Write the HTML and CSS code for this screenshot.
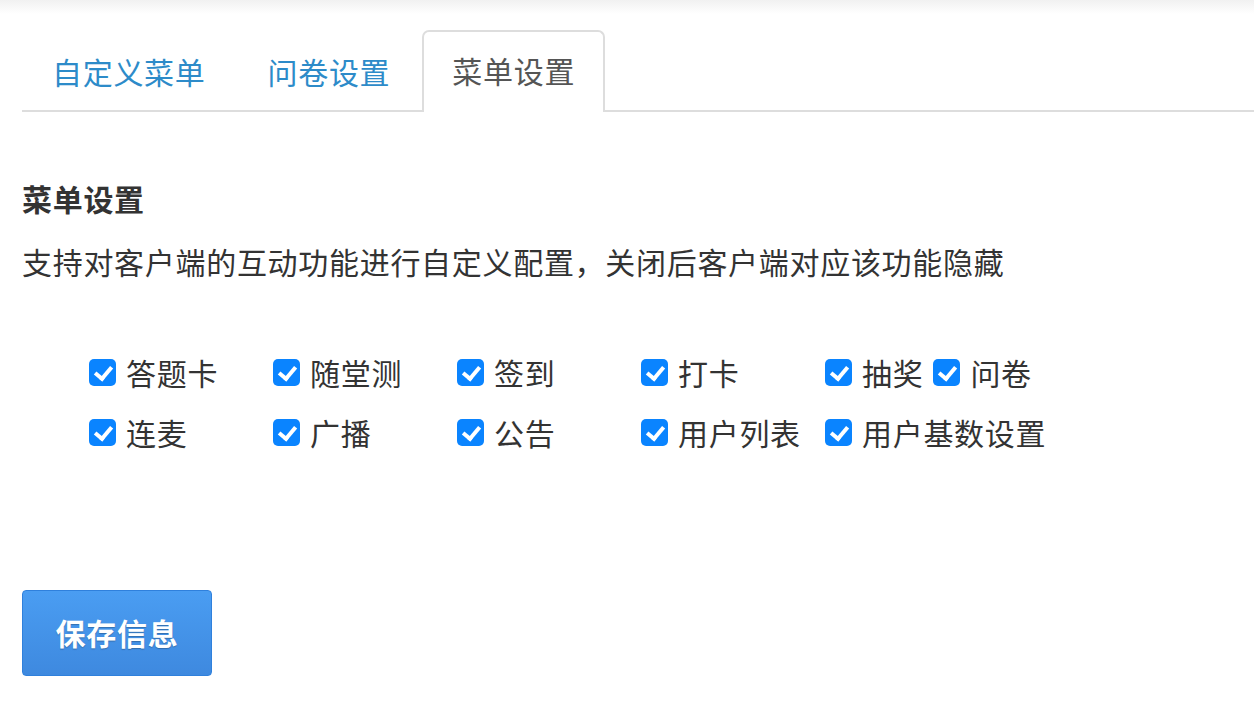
FILE: index.html
```html
<!DOCTYPE html>
<html lang="zh-CN">

<head>
    <meta charset="UTF-8">
    <meta name="viewport" content="width=device-width, initial-scale=1.0">
    <link rel="stylesheet" href="styles.css">
    <title>菜单设置</title>
</head>

<body>
    <div class="topbar"></div>
    <div class="page">
        <div class="tabs">
            <a class="tab" href="#">自定义菜单</a>
            <a class="tab" href="#">问卷设置</a>
            <a class="tab active" href="#">菜单设置</a>
        </div>

        <h2 class="section-title">菜单设置</h2>
        <p class="section-desc">支持对客户端的互动功能进行自定义配置，关闭后客户端对应该功能隐藏</p>

        <div class="options">
            <div class="option-row">
                <label class="option"><input type="checkbox" checked><span>答题卡</span></label>
                <label class="option"><input type="checkbox" checked><span>随堂测</span></label>
                <label class="option"><input type="checkbox" checked><span>签到</span></label>
                <label class="option"><input type="checkbox" checked><span>打卡</span></label>
                <label class="option narrow"><input type="checkbox" checked><span>抽奖</span></label>
                <label class="option narrow"><input type="checkbox" checked><span>问卷</span></label>
            </div>
            <div class="option-row">
                <label class="option"><input type="checkbox" checked><span>连麦</span></label>
                <label class="option"><input type="checkbox" checked><span>广播</span></label>
                <label class="option"><input type="checkbox" checked><span>公告</span></label>
                <label class="option"><input type="checkbox" checked><span>用户列表</span></label>
                <label class="option narrow"><input type="checkbox" checked><span>用户基数设置</span></label>
            </div>
        </div>

        <button class="save-btn">保存信息</button>
    </div>
</body>

</html>
```

FILE: styles.css
```css
body {
    font-family: 'Noto Sans CJK SC', 'Noto Sans', sans-serif;
    background-color: #fff;
    color: #333;
    margin: 0;
    padding: 0;
    letter-spacing: 0.7px;
}

.topbar {
    height: 14px;
    background: linear-gradient(#f1f1f1, #fff);
}

.page {
    padding-left: 22px;
}

.tabs {
    display: flex;
    margin-top: 18px;
    border-bottom: 2px solid #ddd;
    height: 78px;
}

.tab {
    display: block;
    padding: 0 28px;
    margin-right: 2px;
    font-size: 30px;
    line-height: 74px;
    color: #2d8bc9;
    text-decoration: none;
    border: 2px solid transparent;
    border-bottom: none;
    white-space: nowrap;
}

.tab.active {
    color: #555;
    background-color: #fff;
    border-color: #ddd;
    border-radius: 7px 7px 0 0;
    height: 80px;
    line-height: 76px;
    margin-top: -2px;
}

.section-title {
    font-size: 30px;
    font-weight: bold;
    line-height: 42px;
    margin: 65px 0 0;
    color: #333;
}

.section-desc {
    font-size: 30px;
    line-height: 42px;
    margin: 21px 0 0;
    color: #333;
}

.options {
    margin-top: 60px;
    padding-left: 67px;
}

.option-row {
    display: flex;
    height: 60px;
    align-items: center;
}

.option {
    display: flex;
    align-items: center;
    width: 184px;
    font-size: 30px;
    color: #333;
    white-space: nowrap;
}

.option.narrow {
    width: auto;
    margin-right: 10px;
}

.option input {
    appearance: none;
    -webkit-appearance: none;
    width: 27px;
    height: 27px;
    margin: 0 10px 0 0;
    border-radius: 5px;
    background-color: #0a84ff;
    position: relative;
    flex-shrink: 0;
}

.option input:checked::after {
    content: '';
    position: absolute;
    left: 9px;
    top: 4px;
    width: 7px;
    height: 13px;
    border-right: 4px solid #fff;
    border-bottom: 4px solid #fff;
    transform: rotate(40deg);
}

.save-btn {
    display: block;
    margin-top: 128px;
    width: 190px;
    height: 86px;
    padding-bottom: 4px;
    font-family: inherit;
    font-size: 30px;
    font-weight: bold;
    letter-spacing: 0.7px;
    color: #fff;
    background: linear-gradient(#4a9df2, #3e89df);
    border: 1px solid #2f80dc;
    border-radius: 4px;
    text-shadow: 0 1px 1px rgba(0, 0, 0, 0.25);
    cursor: pointer;
}
```
